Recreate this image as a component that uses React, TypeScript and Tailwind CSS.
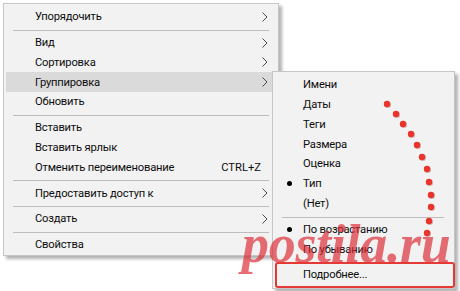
import React from "react";

function Chevron() {
  return (
    <svg width="6" height="10" viewBox="0 0 6 10" className="block">
      <polyline points="0.5,0.5 5,5 0.5,9.5" fill="none" stroke="#4a4a4a" strokeWidth="1" />
    </svg>
  );
}

function Item({ label, sub, shortcut, active }: { label: string; sub?: boolean; shortcut?: string; active?: boolean }) {
  return (
    <div className={`h-[19.8px] flex items-center pl-[29px] ${active ? "bg-[#dadada]" : ""}`}>
      <span className="flex-1 whitespace-nowrap">{label}</span>
      {sub && (
        <span className="pr-[8px]">
          <Chevron />
        </span>
      )}
      {shortcut && <span className="pr-[15px] whitespace-nowrap tracking-normal">{shortcut}</span>}
    </div>
  );
}

function Sep({ ml, mr }: { ml: string; mr: string }) {
  return (
    <div className={`h-[6px] pt-[3px] ${ml} ${mr}`}>
      <div className="h-px bg-[#bdbdbd]" />
    </div>
  );
}

function SubItem({ label, bullet }: { label: string; bullet?: boolean }) {
  return (
    <div className="h-[19.8px] flex items-center">
      <span className="w-[28px] flex justify-center">
        {bullet && <span className="block w-[5px] h-[5px] rounded-full bg-black" />}
      </span>
      <span className="whitespace-nowrap">{label}</span>
    </div>
  );
}

const dots: [number, number][] = [
  [387, 104], [396, 114], [403, 124], [411, 134], [417, 145], [422, 157],
  [427, 169], [429, 182], [431, 195], [431, 207], [429, 221], [427, 233],
];

export default function App() {
  return (
    <div className="relative w-[460px] h-[291px] bg-white overflow-hidden font-['Roboto',sans-serif] text-[11.2px] leading-none tracking-[-0.2px] text-[#0d0d0d]">
      <div className="ml-[3px] mt-[3px] w-[276px] border border-[#c6c6c6] bg-[#f2f2f2] pt-[3px] px-[2px] shadow-[3px_3px_3px_rgba(0,0,0,0.3)]">
        <Item label="Упорядочить" sub />
        <Sep ml="ml-[7px]" mr="mr-[7px]" />
        <Item label="Вид" sub />
        <Item label="Сортировка" sub />
        <Item label="Группировка" sub active />
        <Item label="Обновить" />
        <Sep ml="ml-[7px]" mr="mr-[7px]" />
        <Item label="Вставить" />
        <Item label="Вставить ярлык" />
        <Item label="Отменить переименование" shortcut="CTRL+Z" />
        <Sep ml="ml-[7px]" mr="mr-[7px]" />
        <Item label="Предоставить доступ к" sub />
        <Sep ml="ml-[7px]" mr="mr-[7px]" />
        <Item label="Создать" sub />
        <Sep ml="ml-[7px]" mr="mr-[7px]" />
        <Item label="Свойства" />
      </div>

      <div className="absolute left-[272px] top-[71px] w-[183px] border border-[#c6c6c6] bg-[#f2f2f2] py-[3px] px-[2px] shadow-[3px_3px_3px_rgba(0,0,0,0.3)]">
        <SubItem label="Имени" />
        <SubItem label="Даты" />
        <SubItem label="Теги" />
        <SubItem label="Размера" />
        <SubItem label="Оценка" />
        <SubItem label="Тип" bullet />
        <SubItem label="(Нет)" />
        <Sep ml="ml-[7px]" mr="mr-[8px]" />
        <SubItem label="По возрастанию" bullet />
        <SubItem label="По убыванию" />
        <Sep ml="ml-[7px]" mr="mr-[8px]" />
        <SubItem label="Подробнее..." />
      </div>

      <svg className="absolute left-0 top-0" width="460" height="291" viewBox="0 0 460 291">
        {dots.map(([x, y], i) => (
          <g key={i}>
            <circle cx={x + 0.8} cy={y + 0.8} r="3.3" fill="rgba(120,0,0,0.25)" />
            <circle cx={x} cy={y} r="3.2" fill="#e8342b" />
          </g>
        ))}
      </svg>

      <span className="absolute left-[242px] top-[217px] font-['Liberation_Serif',serif] font-bold italic text-[54px] leading-none tracking-[-0.3px] text-[rgba(218,35,45,0.66)] whitespace-nowrap">
        postila.ru
      </span>

      <div className="absolute left-[275px] top-[262px] w-[180px] h-[26px] border-2 border-[#e53935] rounded-[3px]" />
    </div>
  );
}
